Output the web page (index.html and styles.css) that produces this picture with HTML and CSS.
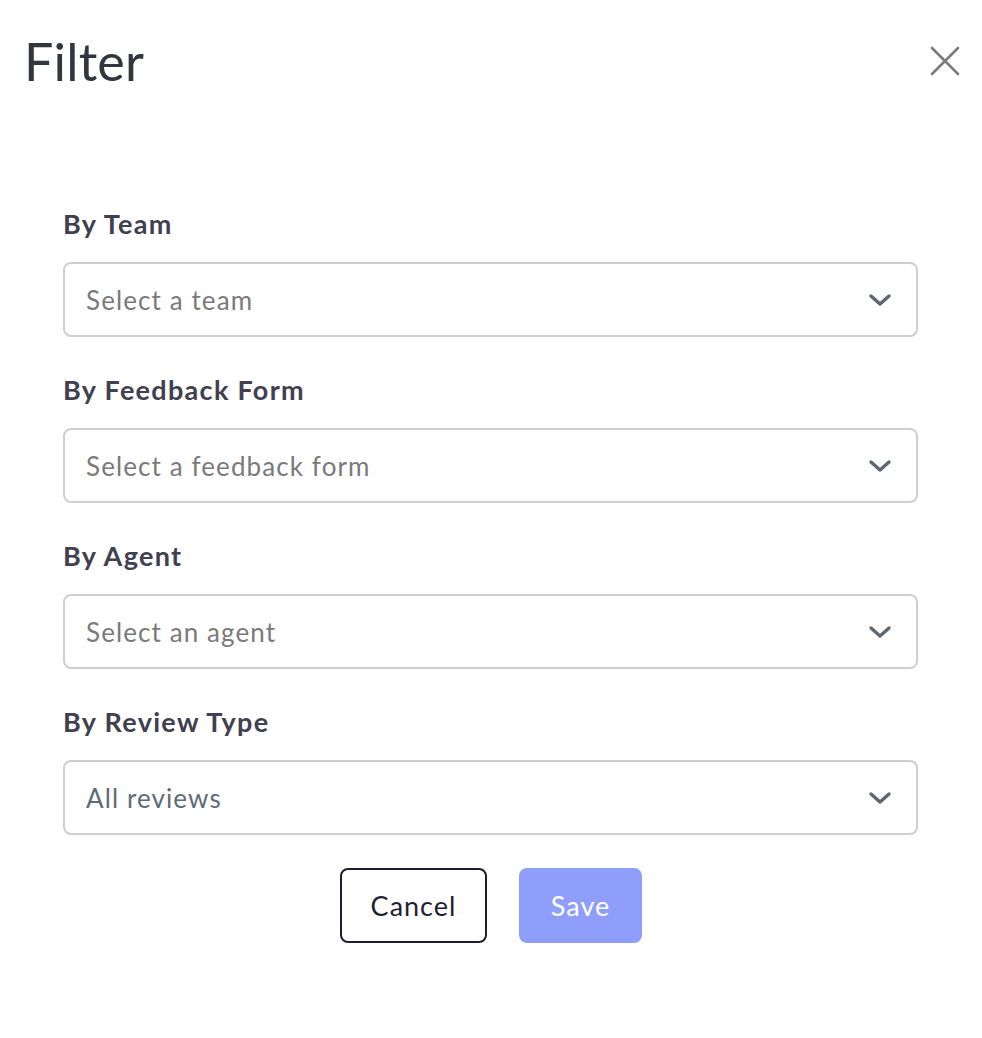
FILE: index.html
```html
<!DOCTYPE html>
<html>
<head>
<meta charset="utf-8">
<link rel="stylesheet" href="styles.css">
</head>
<body>
<div class="modal">
  <header class="head">
    <h1 class="title">Filter</h1>
    <button class="close" aria-label="Close">
      <svg width="30" height="30" viewBox="0 0 30 30"><path d="M2 2 L28 28 M28 2 L2 28" stroke="#7a7a7a" stroke-width="2.6" stroke-linecap="round" fill="none"/></svg>
    </button>
  </header>
  <form class="form">
    <div class="field">
      <label class="label">By Team</label>
      <div class="select"><span class="ph">Select a team</span><svg class="chev" width="24" height="14" viewBox="0 0 24 14"><path d="M3 3 L12 11 L21 3" stroke="#5f6670" stroke-width="3.4" stroke-linecap="round" stroke-linejoin="round" fill="none"/></svg></div>
    </div>
    <div class="field">
      <label class="label">By Feedback Form</label>
      <div class="select"><span class="ph">Select a feedback form</span><svg class="chev" width="24" height="14" viewBox="0 0 24 14"><path d="M3 3 L12 11 L21 3" stroke="#5f6670" stroke-width="3.4" stroke-linecap="round" stroke-linejoin="round" fill="none"/></svg></div>
    </div>
    <div class="field">
      <label class="label">By Agent</label>
      <div class="select"><span class="ph">Select an agent</span><svg class="chev" width="24" height="14" viewBox="0 0 24 14"><path d="M3 3 L12 11 L21 3" stroke="#5f6670" stroke-width="3.4" stroke-linecap="round" stroke-linejoin="round" fill="none"/></svg></div>
    </div>
    <div class="field">
      <label class="label">By Review Type</label>
      <div class="select"><span class="val">All reviews</span><svg class="chev" width="24" height="14" viewBox="0 0 24 14"><path d="M3 3 L12 11 L21 3" stroke="#5f6670" stroke-width="3.4" stroke-linecap="round" stroke-linejoin="round" fill="none"/></svg></div>
    </div>
    <div class="actions">
      <button type="button" class="btn cancel">Cancel</button>
      <button type="button" class="btn save">Save</button>
    </div>
  </form>
</div>
</body>
</html>
```
FILE: styles.css
```css
* { box-sizing: border-box; }
html, body { margin: 0; padding: 0; background: #fff; }
body { font-family: Lato, "Noto Sans", sans-serif; }
.modal { width: 982px; height: 1038px; }
.head {
  display: flex; justify-content: space-between; align-items: flex-start;
  padding: 26px 22px 0 24px;
}
.title {
  margin: 0; font-size: 52px; font-weight: 400; color: #33363d; line-height: 70px;
  letter-spacing: 0.2px;
}
.close {
  border: 0; background: none; padding: 0; margin-top: 20px; cursor: pointer;
  width: 30px; height: 30px;
}
.close svg { display: block; }
.form { display: flex; flex-direction: column; gap: 37px; padding: 112px 64px 0 63px; }
.field { display: flex; flex-direction: column; }
.label {
  font-size: 27px; font-weight: 700; color: #40404f; line-height: 32px; margin-bottom: 22px;
  letter-spacing: 1.3px;
}
.select {
  height: 75px; border: 2px solid #cfcfcf; border-radius: 8px;
  display: flex; align-items: center; justify-content: space-between;
  padding: 0 24px 0 21px;
}
.ph { font-size: 26px; color: #7a7a7a; letter-spacing: 1.1px; }
.val { font-size: 26px; color: #5f6b76; letter-spacing: 1.1px; }
.chev { display: block; }
.actions { display: flex; justify-content: center; gap: 32px; margin-top: -4px; padding-left: 1px; }
.btn {
  height: 75px; border-radius: 8px; font-family: Lato, sans-serif; font-size: 27px; cursor: pointer;
  letter-spacing: 1px;
}
.cancel { width: 147px; border: 2px solid #1e1e33; background: #fff; color: #1e1e33; }
.save { width: 123px; border: 0; background: #8f9efb; color: #fff; }
```
